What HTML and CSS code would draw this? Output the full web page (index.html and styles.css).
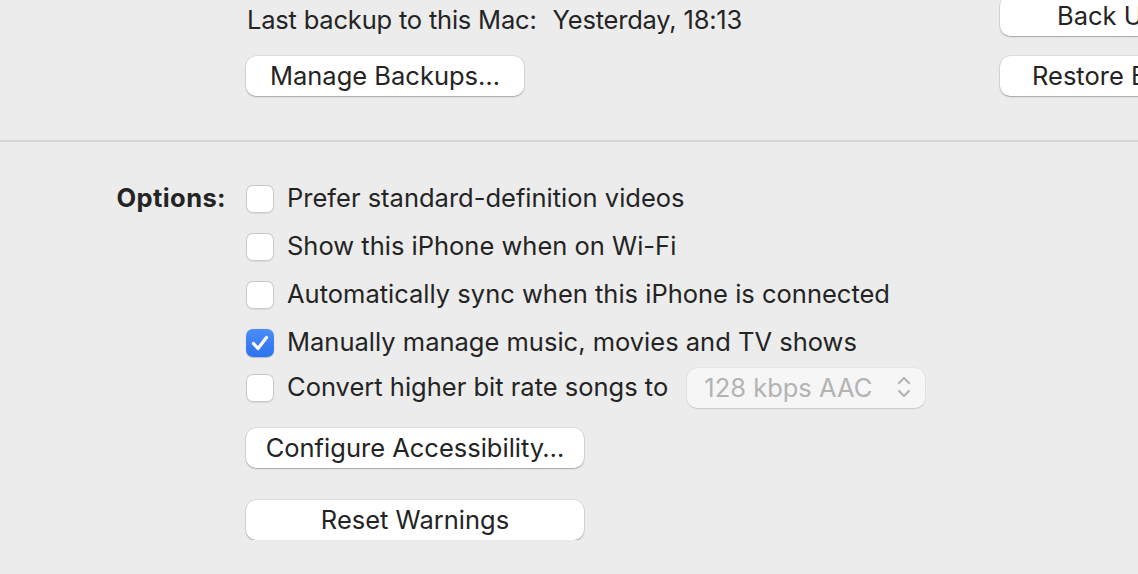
FILE: index.html
```html
<!DOCTYPE html>
<html>
<head>
<meta charset="utf-8">
<link rel="stylesheet" href="styles.css">
</head>
<body>
<div class="page">
  <section class="backup">
    <div class="backup-left">
      <div class="status"><span>Last backup to this Mac:</span><span>Yesterday, 18:13</span></div>
      <button class="btn btn-manage">Manage Backups…</button>
    </div>
    <div class="backup-right">
      <button class="btn btn-side btn-backup">Back Up Now</button>
      <button class="btn btn-side">Restore Backup…</button>
    </div>
  </section>
  <hr class="divider">
  <section class="options">
    <div class="options-label">Options:</div>
    <div class="options-list">
      <label class="opt"><span class="cb"></span><span class="opt-text">Prefer standard-definition videos</span></label>
      <label class="opt"><span class="cb"></span><span class="opt-text">Show this iPhone when on Wi-Fi</span></label>
      <label class="opt"><span class="cb"></span><span class="opt-text">Automatically sync when this iPhone is connected</span></label>
      <label class="opt"><span class="cb cb-on"><svg viewBox="0 0 28 28" width="28" height="28"><path d="M7.5 14.5 L12 19.5 L20.5 8.5" fill="none" stroke="#fff" stroke-width="3.2" stroke-linecap="round" stroke-linejoin="round"/></svg></span><span class="opt-text">Manually manage music, movies and TV shows</span></label>
      <div class="opt opt-convert">
        <span class="cb"></span><span class="opt-text">Convert higher bit rate songs to</span>
        <div class="select"><span>128 kbps AAC</span><svg viewBox="0 0 14 26" width="14" height="26"><path d="M2 9 L7 4 L12 9 M2 17 L7 22 L12 17" fill="none" stroke="#b4b4b4" stroke-width="2.2" stroke-linecap="round" stroke-linejoin="round"/></svg></div>
      </div>
      <button class="btn btn-wide btn-config">Configure Accessibility…</button>
      <button class="btn btn-wide btn-reset">Reset Warnings</button>
    </div>
  </section>
</div>
</body>
</html>
```

FILE: styles.css
```css
* { box-sizing: border-box; }
html, body {
  margin: 0;
  padding: 0;
  background: #ececec;
  overflow: hidden;
}
body {
  width: 1138px;
  height: 574px;
  font-family: Inter, "Noto Sans", "Liberation Sans", sans-serif;
  font-size: 25.5px;
  color: #242424;
}
.page {
  width: 1138px;
  overflow: hidden;
}
.backup {
  display: flex;
  margin-top: -4px;
  padding-left: 246px;
  height: 144px;
}
.backup-left {
  width: 754px;
  flex-shrink: 0;
  display: flex;
  flex-direction: column;
  gap: 20px;
}
.status {
  height: 40px;
  display: flex;
  align-items: center;
  gap: 16px;
  padding-left: 1px;
  padding-top: 6px;
  letter-spacing: -0.2px;
}
.backup-right {
  display: flex;
  flex-direction: column;
  gap: 20px;
  width: 220px;
  flex-shrink: 0;
}
.btn {
  font-family: inherit;
  font-size: 25.5px;
  color: #242424;
  background: #fff;
  border: none;
  border-radius: 10px;
  height: 40px;
  padding: 0;
  box-shadow: 0 0 0 0.5px rgba(0,0,0,0.12), 0 1px 1.5px rgba(0,0,0,0.25);
  text-align: center;
  line-height: 38px;
}
.btn-manage { width: 278px; }
.btn-side { width: 220px; text-align: left; padding-left: 32px; white-space: nowrap; overflow: hidden; }
.btn-backup { padding-left: 57px; }
.divider {
  margin: 0;
  border: none;
  height: 2px;
  background: #d6d6d6;
}
.options {
  display: flex;
  padding-top: 43px;
}
.options-label {
  width: 226px;
  text-align: right;
  font-weight: 700;
  letter-spacing: 0.4px;
  height: 28px;
  line-height: 26px;
}
.options-list {
  margin-left: 20px;
  display: flex;
  flex-direction: column;
  align-items: flex-start;
}
.opt {
  display: flex;
  align-items: center;
  gap: 13px;
  height: 28px;
  margin-bottom: 20px;
  white-space: nowrap;
}
.opt-text {
  line-height: 26px;
  margin-bottom: 2px;
}
.opt-convert {
  height: 40px;
  margin-top: -9px;
  margin-bottom: 0;
}
.cb {
  width: 28px;
  height: 28px;
  border-radius: 7px;
  background: #fff;
  border: 1px solid #c9c9c9;
  box-shadow: 0 0.5px 1px rgba(0,0,0,0.08);
  flex-shrink: 0;
  display: block;
}
.cb-on {
  border: none;
  background: linear-gradient(#4a8cf8, #2d73f0);
  box-shadow: 0 0.5px 1px rgba(0,0,0,0.2);
}
.cb-on svg { display: block; }
.select {
  margin-left: 6px;
  width: 238px;
  height: 40px;
  border-radius: 10px;
  background: #f6f6f6;
  box-shadow: 0 0 0 0.5px rgba(0,0,0,0.06), 0 1px 1.5px rgba(0,0,0,0.12);
  display: flex;
  align-items: center;
  justify-content: space-between;
  padding: 0 14px 2px 17px;
  color: #b3b3b3;
}
.select svg { display: block; }
.btn-wide { width: 338px; }
.btn-config { margin-top: 20px; }
.btn-reset { margin-top: 32px; }
```
